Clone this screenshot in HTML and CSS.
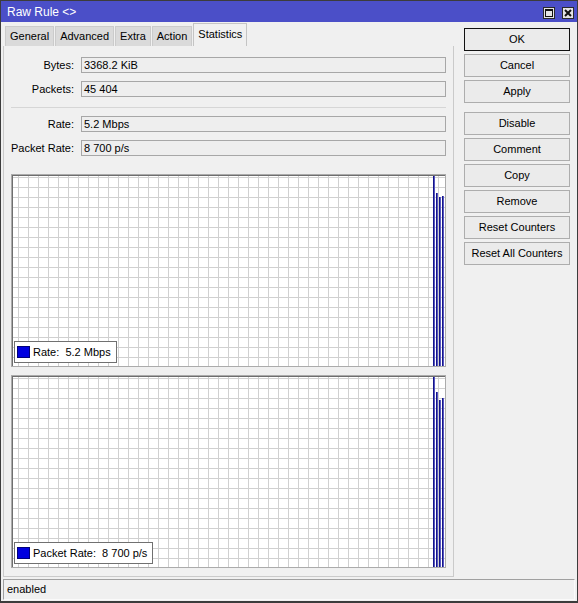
FILE: index.html
```html
<!DOCTYPE html>
<html lang="en">
<head>
    <meta charset="UTF-8">
    <title>Raw Rule &lt;&gt;</title>
    <link rel="stylesheet" href="styles.css">
</head>
<body>
    <div class="window">
        <div class="titlebar">
            <span class="title">Raw Rule &lt;&gt;</span>
            <div class="title-buttons">
                <span class="tbtn">
                    <svg width="10" height="10" viewBox="0 0 10 10"><rect x="1.5" y="1.5" width="7" height="7" fill="none" stroke="#111" stroke-width="1"/><rect x="1" y="1" width="8" height="2" fill="#111"/></svg>
                </span>
                <span class="tbtn">
                    <svg width="10" height="10" viewBox="0 0 10 10"><path d="M2 2 L8 8 M8 2 L2 8" stroke="#111" stroke-width="2"/></svg>
                </span>
            </div>
        </div>

        <div class="main">
            <div class="left">
                <div class="tabs">
                    <div class="tab">General</div>
                    <div class="tab">Advanced</div>
                    <div class="tab">Extra</div>
                    <div class="tab">Action</div>
                    <div class="tab active">Statistics</div>
                </div>
                <div class="panel">
                    <div class="row"><label>Bytes:</label><div class="field">3368.2 KiB</div></div>
                    <div class="row"><label>Packets:</label><div class="field">45 404</div></div>
                    <div class="sep"></div>
                    <div class="row"><label>Rate:</label><div class="field">5.2 Mbps</div></div>
                    <div class="row"><label>Packet Rate:</label><div class="field">8 700 p/s</div></div>

                    <div class="graphs">
                        <div class="graph">
                            <div class="bars">
                                <i style="height: 100%"></i>
                                <i style="height: 91%"></i>
                                <i style="height: 89%"></i>
                                <i style="height: 89.5%"></i>
                            </div>
                            <div class="legend"><span class="swatch"></span>Rate:  5.2 Mbps</div>
                        </div>
                        <div class="graph">
                            <div class="bars">
                                <i style="height: 100%"></i>
                                <i style="height: 92%"></i>
                                <i style="height: 88%"></i>
                                <i style="height: 89%"></i>
                            </div>
                            <div class="legend"><span class="swatch"></span>Packet Rate:  8 700 p/s</div>
                        </div>
                    </div>
                </div>
            </div>

            <div class="buttons">
                <div class="btn default">OK</div>
                <div class="btn">Cancel</div>
                <div class="btn">Apply</div>
                <div class="btn group-start">Disable</div>
                <div class="btn">Comment</div>
                <div class="btn">Copy</div>
                <div class="btn">Remove</div>
                <div class="btn">Reset Counters</div>
                <div class="btn">Reset All Counters</div>
            </div>
        </div>

        <div class="statusbar">enabled</div>
    </div>
</body>
</html>
```

FILE: styles.css
```css
body {
    margin: 0;
    background: #f0f0f0;
    font-family: "Liberation Sans", Arial, sans-serif;
    font-size: 11px;
    color: #000;
}

.window {
    width: 578px;
    height: 603px;
    box-sizing: border-box;
    border: 1px solid #3c3c3c;
    border-bottom-width: 2px;
    display: flex;
    flex-direction: column;
    background: #f0f0f0;
}

/* title bar */
.titlebar {
    height: 21px;
    flex-shrink: 0;
    background: #4b4fc8;
    color: #fff;
    font-size: 12px;
    display: flex;
    align-items: center;
    justify-content: space-between;
    padding: 0 3px 0 6px;
}
.title-buttons {
    display: flex;
    gap: 7px;
    margin-top: 2px;
}
.tbtn {
    width: 12px;
    height: 12px;
    box-sizing: border-box;
    border: 1px solid #2a2a2a;
    background: #e4e4e4;
    display: flex;
    align-items: center;
    justify-content: center;
}

.main {
    flex: 1;
    display: flex;
    padding-left: 2px;
}
.left {
    width: 451px;
    display: flex;
    flex-direction: column;
}

/* tabs */
.tabs {
    height: 24px;
    display: flex;
    align-items: flex-end;
    padding-left: 2px;
}
.tab {
    height: 20px;
    line-height: 19px;
    padding: 0 4px;
    margin-right: 1px;
    box-sizing: border-box;
    background: #dadada;
    border: 1px solid #cbcbcb;
    border-bottom: none;
}
.tab.active {
    height: 23px;
    line-height: 20px;
    background: #f0f0f0;
    border-color: #c4c4c4;
}

.panel {
    flex: 1;
    display: flex;
    flex-direction: column;
    border: 1px solid #cacaca;
    border-top: none;
    padding: 11px 7px 8px;
}

/* read-only fields */
.row {
    display: flex;
    align-items: center;
    height: 16px;
    margin-bottom: 8px;
}
.row label {
    width: 63px;
    padding-right: 7px;
    text-align: right;
    white-space: nowrap;
}
.field {
    flex: 1;
    height: 16px;
    box-sizing: border-box;
    border: 1px solid #a7a7a7;
    background: #eeeeee;
    padding-left: 2px;
    line-height: 14px;
}
.sep {
    height: 1px;
    background: #d6d6d6;
    margin: 2px 0 8px;
}

/* graphs */
.graphs {
    flex: 1;
    display: flex;
    flex-direction: column;
    gap: 8px;
    margin-top: 10px;
}
.graph {
    flex: 1;
    position: relative;
    border: 1px solid #ababab;
    box-shadow: inset 1px 1px 0 #6e6e6e;
    background-color: #fff;
    background-image:
        linear-gradient(to right, #d0d0d0 1px, transparent 1px),
        linear-gradient(to bottom, #d0d0d0 1px, transparent 1px);
    background-size: 10px 10px;
    background-position: 6px 2px;
}
.bars {
    position: absolute;
    top: 1px;
    bottom: 0;
    right: 1px;
    display: flex;
    align-items: flex-end;
    gap: 1px;
}
.bars i {
    width: 2px;
    background: linear-gradient(to right, #14148a 1px, #5656c0 1px);
}
.legend {
    position: absolute;
    left: 2px;
    bottom: 3px;
    height: 22px;
    box-sizing: border-box;
    border: 1px solid #707070;
    background: #fff;
    display: flex;
    align-items: center;
    padding: 0 5px 0 2px;
    white-space: pre;
}
.swatch {
    width: 13px;
    height: 12px;
    box-sizing: border-box;
    background: #0000e0;
    border: 1px solid #00007a;
    margin-right: 3px;
}

/* side buttons */
.buttons {
    width: 106px;
    margin: 6px 0 0 10px;
    display: flex;
    flex-direction: column;
    gap: 3px;
}
.btn {
    height: 23px;
    box-sizing: border-box;
    border: 1px solid #adadad;
    background: #ebebeb;
    text-align: center;
    line-height: 21px;
}
.btn.default {
    border-color: #111;
}
.btn.group-start {
    margin-top: 6px;
}

.statusbar {
    height: 21px;
    flex-shrink: 0;
    box-sizing: border-box;
    margin: 2px 2px 1px;
    border: 1px solid;
    border-color: #a0a0a0 #fafafa #fafafa #a0a0a0;
    padding-left: 3px;
    line-height: 19px;
}
```
